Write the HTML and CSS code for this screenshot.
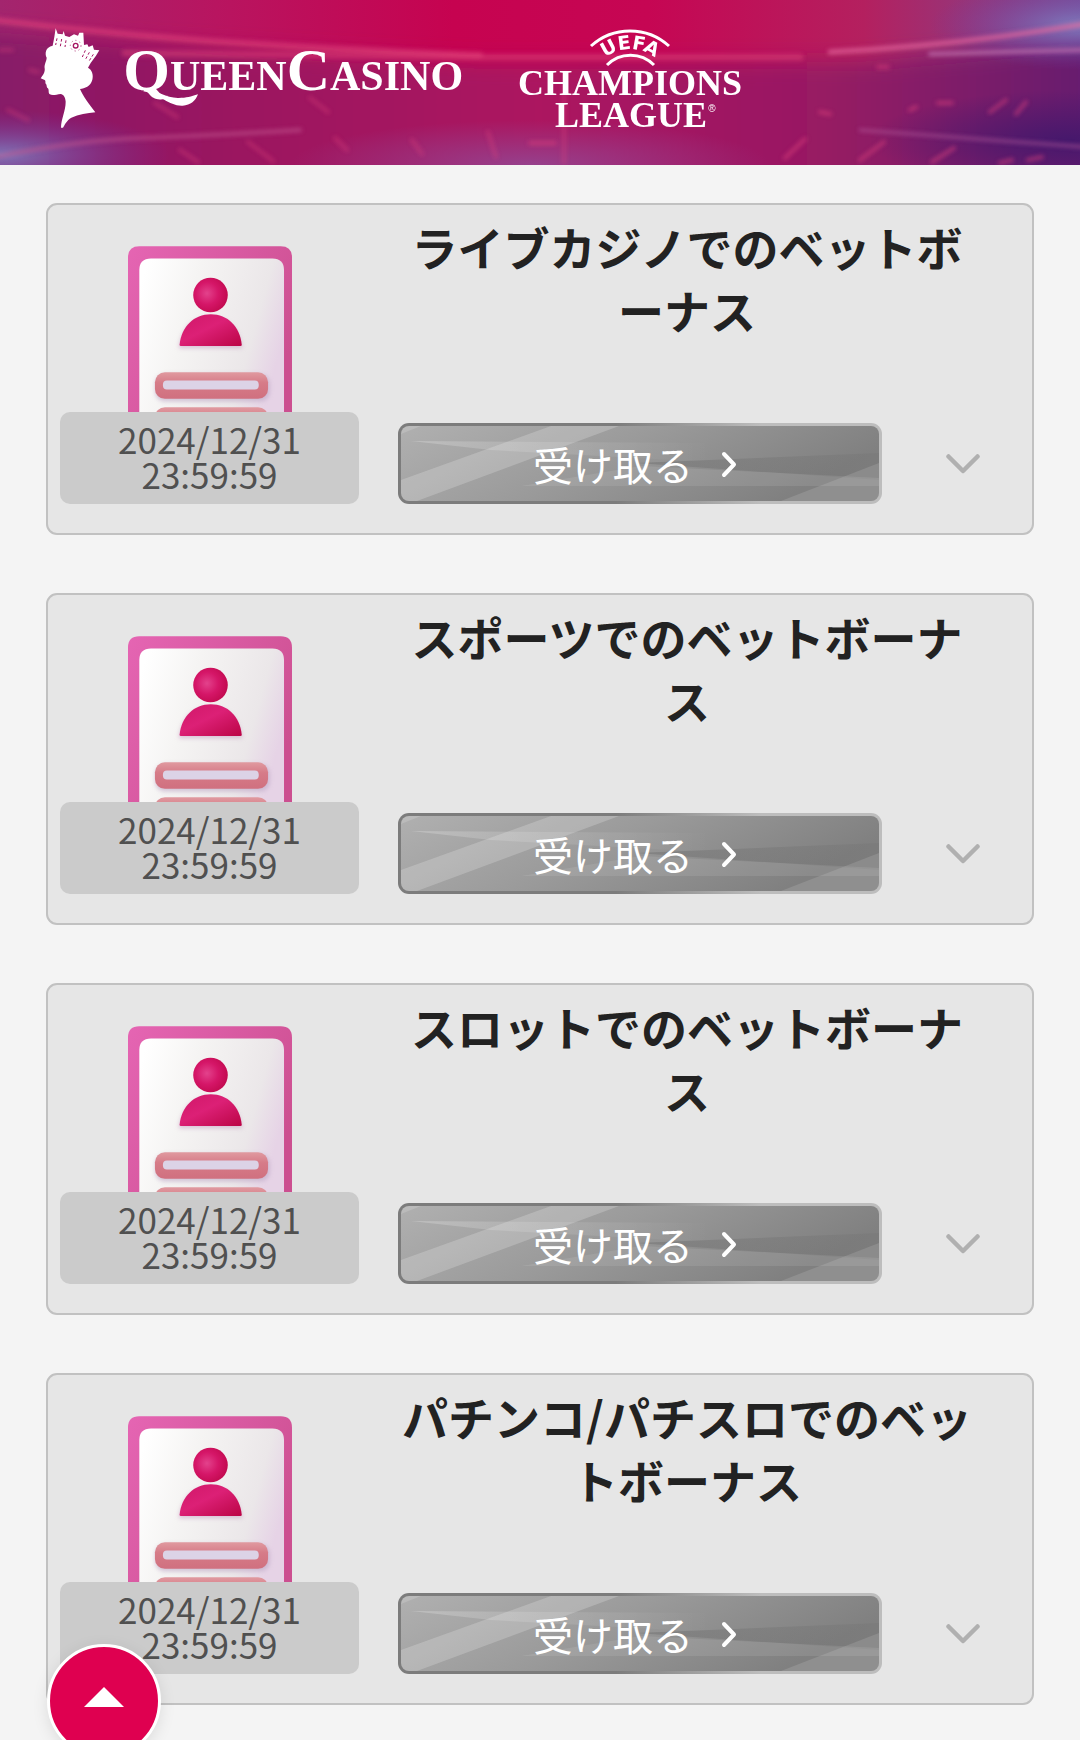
FILE: index.html
```html
<!DOCTYPE html>
<html lang="ja">
<head>
  <meta charset="utf-8">
  <meta name="viewport" content="width=device-width, initial-scale=1">
  <title>Queen Casino</title>
  <link rel="stylesheet" href="styles.css">
</head>
<body>
  <!-- shared drawings -->
  <svg class="defs" width="0" height="0" aria-hidden="true">
    <defs>
      <linearGradient id="frame" x1="0" y1="0" x2="1" y2="0.6">
        <stop offset="0" stop-color="#e565b3"/>
        <stop offset="1" stop-color="#cc4f90"/>
      </linearGradient>
      <linearGradient id="paper" x1="0" y1="0.2" x2="1" y2="0.5">
        <stop offset="0" stop-color="#ffffff"/>
        <stop offset="0.35" stop-color="#f5f4f3"/>
        <stop offset="0.8" stop-color="#ebe7e9"/>
        <stop offset="1" stop-color="#e6d3e6"/>
      </linearGradient>
      <radialGradient id="head" cx="0.4" cy="0.45" r="0.65">
        <stop offset="0" stop-color="#e3428c"/>
        <stop offset="0.5" stop-color="#d51668"/>
        <stop offset="1" stop-color="#c0084c"/>
      </radialGradient>
      <linearGradient id="torso" x1="0" y1="0" x2="1" y2="1">
        <stop offset="0" stop-color="#d01768"/>
        <stop offset="0.45" stop-color="#dc2076"/>
        <stop offset="1" stop-color="#bb0445"/>
      </linearGradient>
      <linearGradient id="bar" x1="0" y1="0" x2="0" y2="1">
        <stop offset="0" stop-color="#e09aa0"/>
        <stop offset="0.4" stop-color="#d67b88"/>
        <stop offset="1" stop-color="#d0707f"/>
      </linearGradient>
      <linearGradient id="metal" x1="0" y1="0" x2="1" y2="0.3">
        <stop offset="0" stop-color="#b0b0b0"/>
        <stop offset="0.5" stop-color="#9a9a9a"/>
        <stop offset="1" stop-color="#808080"/>
      </linearGradient>
      <linearGradient id="fade" x1="0" y1="0" x2="1" y2="0">
        <stop offset="0" stop-color="#fff" stop-opacity="0.22"/>
        <stop offset="1" stop-color="#fff" stop-opacity="0"/>
      </linearGradient>
      <linearGradient id="shade" x1="0" y1="0" x2="1" y2="0">
        <stop offset="0" stop-color="#666" stop-opacity="0.4"/>
        <stop offset="1" stop-color="#666" stop-opacity="0.15"/>
      </linearGradient>
      <filter id="soft" x="-20%" y="-20%" width="140%" height="140%"><feGaussianBlur stdDeviation="6"/></filter>
    </defs>
    <symbol id="id-card" viewBox="260 153 493 498">
      <path d="M260 660V187q0-34 34-34h425q34 0 34 34v473z" fill="url(#frame)"/>
      <path d="M294 660V225q0-35 35-35h365q35 0 35 35v435z" fill="url(#paper)"/>
      <path d="M412 460q14-94 95-94t98 94z" fill="#c9a4c4" opacity="0.6" filter="url(#soft)"/>
      <circle cx="508" cy="300" r="52" fill="url(#head)"/>
      <path d="M415 449c6-54 43-91 94-91s87 37 93 91q0 4-4 4H419q-4 0-4-4z" fill="url(#torso)"/>
      <rect x="342" y="538" width="344" height="82" rx="28" fill="#bba4c4" opacity="0.6" filter="url(#soft)"/>
      <rect x="341" y="532" width="340" height="80" rx="30" fill="url(#bar)"/>
      <rect x="365" y="557" width="288" height="27" rx="12" fill="#dcd3e6"/>
      <rect x="341" y="637" width="340" height="80" rx="30" fill="url(#bar)"/>
    </symbol>
    <symbol id="sheen" viewBox="0 0 478 75" preserveAspectRatio="none">
      <rect width="478" height="75" fill="url(#metal)"/>
      <path d="M0 0h20L0 8z" fill="#fff" opacity="0.15"/>
      <path d="M0 54L150 0h68L16 75H0z" fill="#fff" opacity="0.2"/>
      <path d="M10 15L310 17V36L90 24z" fill="url(#fade)"/>
      <path d="M235 37l243-10v27z" fill="url(#shade)"/>
      <path d="M240 40l238 12v8H120z" fill="#fff" opacity="0.09"/>
      <path d="M380 75L478 37v38z" fill="#fff" opacity="0.12"/>
    </symbol>
    <symbol id="arrow-right" viewBox="0 0 26 30">
      <path d="M7 5l10 10.500L7 26" fill="none" stroke="#fff" stroke-width="4" stroke-linecap="round" stroke-linejoin="round"/>
    </symbol>
    <symbol id="arrow-down" viewBox="0 0 34 22">
      <path d="M2.500 3.500L17 18 31.500 3.500" fill="none" stroke="#b0b0b0" stroke-width="4.500" stroke-linecap="round" stroke-linejoin="round"/>
    </symbol>
  </svg>

  <header class="header">
    <svg class="header-bg" viewBox="0 0 1080 165" preserveAspectRatio="none" aria-hidden="true">
      <defs>
        <linearGradient id="sky" x1="0" y1="0" x2="1" y2="0">
          <stop offset="0" stop-color="#a3256e"/>
          <stop offset="0.2" stop-color="#b81560"/>
          <stop offset="0.42" stop-color="#c60350"/>
          <stop offset="0.6" stop-color="#c60653"/>
          <stop offset="0.8" stop-color="#b4205f"/>
          <stop offset="1" stop-color="#784a94"/>
        </linearGradient>
        <linearGradient id="stand" x1="0" y1="0" x2="1" y2="0">
          <stop offset="0" stop-color="#851c68"/>
          <stop offset="0.25" stop-color="#9c1360"/>
          <stop offset="0.5" stop-color="#ac1261"/>
          <stop offset="0.75" stop-color="#971a63"/>
          <stop offset="1" stop-color="#621f70"/>
        </linearGradient>
        <radialGradient id="glow"><stop offset="0" stop-color="#8080c0" stop-opacity="0.9"/><stop offset="1" stop-color="#7038a0" stop-opacity="0"/></radialGradient>
        <radialGradient id="night"><stop offset="0" stop-color="#46186c"/><stop offset="1" stop-color="#46186c" stop-opacity="0"/></radialGradient>
        <radialGradient id="haze"><stop offset="0" stop-color="#96408c"/><stop offset="1" stop-color="#96408c" stop-opacity="0"/></radialGradient>
        <filter id="b12" x="-20%" y="-50%" width="140%" height="200%"><feGaussianBlur stdDeviation="10"/></filter>
        <filter id="b2" x="-5%" y="-20%" width="110%" height="140%"><feGaussianBlur stdDeviation="2"/></filter>
      </defs>
      <rect width="1080" height="165" fill="url(#sky)"/>
      <path d="M-30 30Q200 50 480 62H860L1110 40V200H-30z" fill="url(#stand)" filter="url(#b12)"/>
      <ellipse cx="0" cy="155" rx="170" ry="45" fill="url(#glow)"/>
      <ellipse cx="1080" cy="25" rx="150" ry="45" fill="url(#glow)"/>
      <ellipse cx="1070" cy="140" rx="200" ry="50" fill="url(#night)"/>
      <ellipse cx="530" cy="165" rx="240" ry="45" fill="url(#haze)"/>
      <g fill="none" stroke="#e2447c" stroke-linecap="round" filter="url(#b2)">
        <path d="M-5 20Q140 38 290 46T480 55" stroke-width="6" opacity="0.6"/>
        <path d="M125 53L480 57H800" stroke-width="7" opacity="0.45"/>
        <path d="M830 52Q960 45 1085 24" stroke-width="5" stroke="#e66a9c" opacity="0.7"/>
        <path d="M930 54L1085 50" stroke-width="4" stroke="#c070ae" opacity="0.8"/>
        <path d="M-5 157Q80 140 140 138T300 130" stroke-width="4" stroke="#c25590" opacity="0.6"/>
        <path d="M860 130L1085 147" stroke-width="3" stroke="#b55a9c" opacity="0.6"/>
        <path d="M0 50H12M8 110l20 10M155 103l22 14M180 150l18 12M248 142l25 19M335 138l12 12M412 140l10 14M30 70l8 2M310 98l18 14M488 132l8 25M564 85v78" stroke-width="4" opacity="0.35"/>
        <path d="M785 158l20-19M860 160l24-18M932 162l22-14M990 112l16-12M1016 114l10-12M910 110l6-3M820 112l10 2M878 67h10M938 103h14M530 143h25M1028 160l14-3M1000 163l12-3" stroke-width="4" opacity="0.5"/>
      </g>
    </svg>
    <a class="logo" href="#" aria-label="Queen Casino">
      <svg width="427" height="100" viewBox="120 85 1281 300">
        <g fill="#fff">
          <path d="M158 138L163 112 167 86 173 102 188 104 191 94 195 108 208 112 222 104 234 108 238 99H250L252 136 262 134 266 142 278 137 282 150 298 152 288 168 272 190 264 204C276 210 281 226 277 240 272 260 254 266 240 268 248 288 268 314 286 338 262 340 236 344 214 354 200 362 194 376 189 384H183C183 358 197 334 197 306 196 292 190 284 182 283 168 284 158 290 148 283 144 278 148 272 144 266 138 262 142 256 137 252 135 248 138 244 134 241L122 236C128 228 136 218 134 206 132 194 140 184 140 174 134 162 136 142 158 138z"/>
          <g fill="none" stroke="#a51562" stroke-width="3" stroke-dasharray="8 6">
            <path d="M171 116l-4 20M185 118l-4 22M198 122l-3 20M256 152l-9 20M268 158l-12 22M280 164l-14 22"/>
            <circle cx="227" cy="138" r="7" stroke-width="4" stroke-dasharray="none"/>
            <circle cx="227" cy="138" r="16" stroke-width="2" stroke-dasharray="4 8"/>
          </g>
          <text class="logo-name" x="370" y="272">QueenCasino</text>
          <path d="M436 266c38 8 62 30 100 29 24 0 36-4 58-11-7 20-22 32-46 34-42 2-62-32-118-43z"/>
        </g>
      </svg>
    </a>
    <a class="logo" href="#" aria-label="UEFA Champions League">
      <svg width="226" height="100" viewBox="517 28 226 100">
        <path d="M591 46A58 58 0 0 1 669 46" fill="none" stroke="#fff" stroke-width="3"/>
        <path d="M607 65A33 33 0 0 1 654 65" fill="none" stroke="#fff" stroke-width="3"/>
        <path id="uefa-arc" d="M591 88A39 39 0 0 1 669 88" fill="none"/>
        <g fill="#fff" text-anchor="middle">
          <text class="uefa"><textPath href="#uefa-arc" startOffset="50%">UEFA</textPath></text>
          <text class="league" x="630" y="95">CHAMPIONS</text>
          <text class="league" x="631" y="127">LEAGUE</text>
          <text class="reg" x="712" y="112">®</text>
        </g>
      </svg>
    </a>
  </header>

  <main class="bonus-list">
    <article class="bonus">
      <div class="bonus-left">
        <svg class="bonus-icon" aria-hidden="true"><use href="#id-card"/></svg>
        <time class="bonus-date">2024/12/31<br>23:59:59</time>
      </div>
      <div class="bonus-right">
        <h2>ライブカジノでのベットボーナス</h2>
        <div class="bonus-actions">
          <button type="button" class="claim"><svg class="claim-bg" aria-hidden="true"><use href="#sheen"/></svg><span>受け取る</span><svg class="claim-arrow" aria-hidden="true"><use href="#arrow-right"/></svg></button>
          <button type="button" class="more" aria-label="詳細"><svg><use href="#arrow-down"/></svg></button>
        </div>
      </div>
    </article>

    <article class="bonus">
      <div class="bonus-left">
        <svg class="bonus-icon" aria-hidden="true"><use href="#id-card"/></svg>
        <time class="bonus-date">2024/12/31<br>23:59:59</time>
      </div>
      <div class="bonus-right">
        <h2>スポーツでのベットボーナス</h2>
        <div class="bonus-actions">
          <button type="button" class="claim"><svg class="claim-bg" aria-hidden="true"><use href="#sheen"/></svg><span>受け取る</span><svg class="claim-arrow" aria-hidden="true"><use href="#arrow-right"/></svg></button>
          <button type="button" class="more" aria-label="詳細"><svg><use href="#arrow-down"/></svg></button>
        </div>
      </div>
    </article>

    <article class="bonus">
      <div class="bonus-left">
        <svg class="bonus-icon" aria-hidden="true"><use href="#id-card"/></svg>
        <time class="bonus-date">2024/12/31<br>23:59:59</time>
      </div>
      <div class="bonus-right">
        <h2>スロットでのベットボーナス</h2>
        <div class="bonus-actions">
          <button type="button" class="claim"><svg class="claim-bg" aria-hidden="true"><use href="#sheen"/></svg><span>受け取る</span><svg class="claim-arrow" aria-hidden="true"><use href="#arrow-right"/></svg></button>
          <button type="button" class="more" aria-label="詳細"><svg><use href="#arrow-down"/></svg></button>
        </div>
      </div>
    </article>

    <article class="bonus">
      <div class="bonus-left">
        <svg class="bonus-icon" aria-hidden="true"><use href="#id-card"/></svg>
        <time class="bonus-date">2024/12/31<br>23:59:59</time>
      </div>
      <div class="bonus-right">
        <h2>パチンコ/パチスロでのベットボーナス</h2>
        <div class="bonus-actions">
          <button type="button" class="claim"><svg class="claim-bg" aria-hidden="true"><use href="#sheen"/></svg><span>受け取る</span><svg class="claim-arrow" aria-hidden="true"><use href="#arrow-right"/></svg></button>
          <button type="button" class="more" aria-label="詳細"><svg><use href="#arrow-down"/></svg></button>
        </div>
      </div>
    </article>
  </main>

  <a class="to-top" href="#" aria-label="トップへ戻る">
    <svg width="40" height="20" viewBox="0 0 40 20"><path d="M0 20L20 0l20 20z" fill="#fff"/></svg>
  </a>
</body>
</html>
```

FILE: styles.css
```css
* {
  box-sizing: border-box;
}

body {
  margin: 0;
  background: #f4f4f4;
  color: #222;
  font-family: "Noto Sans CJK JP", sans-serif;
}

.defs {
  position: absolute;
}

/* header */
.header {
  position: relative;
  display: flex;
  gap: 50px;
  padding: 28px 40px 37px;
  overflow: hidden;
  background: #a51562;
}

.header-bg {
  position: absolute;
  top: 0;
  left: 0;
  width: 100%;
  height: 100%;
}

.logo {
  position: relative;
}

.logo svg {
  display: block;
  overflow: visible;
}

.logo-name {
  font: bold 180px "Liberation Serif", serif;
  font-variant: small-caps;
}

.uefa {
  font: bold 19px "DejaVu Sans", sans-serif;
}

.league {
  font: bold 36px "Liberation Serif", serif;
}

.reg {
  font: 10px "Liberation Sans", sans-serif;
}

/* bonus cards */
.bonus-list {
  display: flex;
  flex-direction: column;
  gap: 58px;
  padding: 38px 46px 35px;
}

.bonus {
  display: flex;
  gap: 39px;
  padding: 0 52px 29px 12px;
  background: #e6e6e6;
  border: 2px solid #c1c1c1;
  border-radius: 11px;
}

.bonus-left {
  flex: 0 0 299px;
  padding-top: 41px;
}

.bonus-icon {
  display: block;
  width: 164px;
  height: 166px;
  margin: 0 auto;
}

.bonus-date {
  display: block;
  padding: 9px 0 13px;
  background: #cbcbcb;
  border-radius: 10px;
  color: #505050;
  font-size: 35px;
  line-height: 35px;
  text-align: center;
}

.bonus-right {
  flex: 1;
  display: flex;
  flex-direction: column;
  justify-content: space-between;
}

.bonus h2 {
  margin: 0;
  padding: 10px 4px 0 0;
  font-size: 46px;
  font-weight: bold;
  line-height: 63px;
  text-align: center;
  word-break: break-all;
  line-break: anywhere;
}

.bonus-actions {
  display: flex;
  justify-content: space-between;
  align-items: center;
}

.claim {
  position: relative;
  display: flex;
  justify-content: center;
  align-items: center;
  gap: 24px;
  width: 484px;
  height: 81px;
  padding: 0 4px 0 0;
  overflow: hidden;
  border: 3px solid transparent;
  border-radius: 11px;
  background: linear-gradient(90deg, #7c7c7c 45%, #bdbdbd 75%) border-box;
  color: #fff;
  font-family: inherit;
  font-size: 40px;
  line-height: 60px;
  cursor: pointer;
}

.claim span,
.claim-arrow {
  position: relative;
}

.claim-bg {
  position: absolute;
  top: 0;
  left: 0;
  width: 100%;
  height: 100%;
}

.claim-arrow {
  width: 26px;
  height: 30px;
}

.more {
  padding: 0;
  border: none;
  background: none;
  cursor: pointer;
}

.more svg {
  display: block;
  width: 34px;
  height: 22px;
}

/* back to top */
.to-top {
  position: fixed;
  left: 47px;
  bottom: -18px;
  display: flex;
  justify-content: center;
  align-items: center;
  width: 114px;
  height: 114px;
  padding-bottom: 8px;
  background: #df0050;
  border: 3px solid #fff;
  border-radius: 50%;
  box-shadow: 0 4px 16px rgba(0, 0, 0, 0.1);
}
```
